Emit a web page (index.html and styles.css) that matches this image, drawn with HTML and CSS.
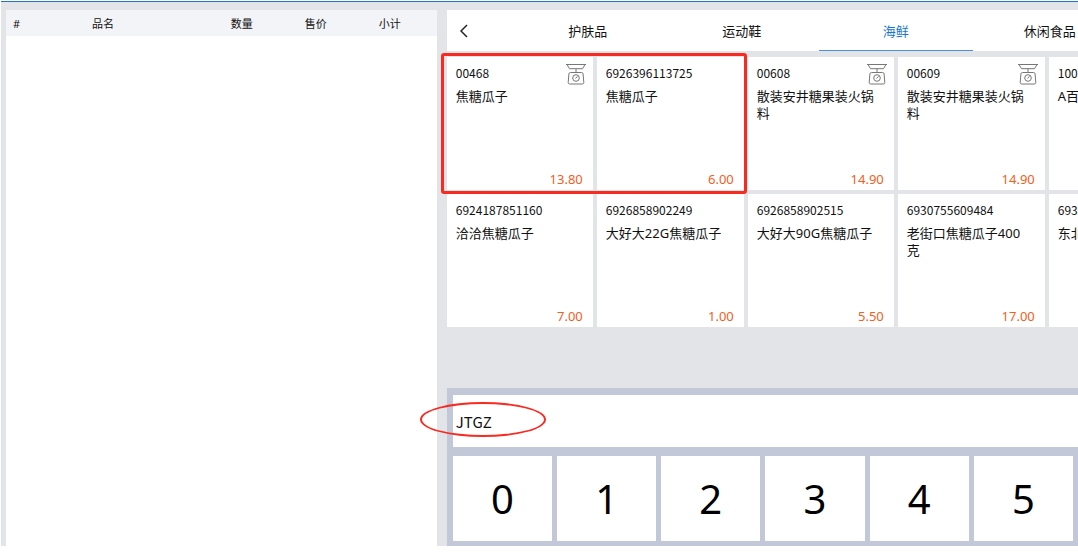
FILE: index.html
```html
<!DOCTYPE html>
<html lang="zh-CN">
<head>
    <meta charset="UTF-8">
    <meta name="viewport" content="width=device-width, initial-scale=1.0">
    <title>收银台</title>
    <link rel="stylesheet" href="styles.css">
</head>
<body>
    <svg class="defs" aria-hidden="true">
        <symbol id="scale" viewBox="0 0 22 22">
            <path d="M1 1.500h20M2 1.500l2.500 4.200h13L20 1.500M11 5.700v3.800M7.500 9.500h7"/>
            <path d="M5.500 9.500h11q1.500 0 1.600 1.500l.7 8.500q.1 1.500-1.500 1.500H4.700q-1.600 0-1.500-1.500l.7-8.500q.1-1.500 1.600-1.500z"/>
            <circle cx="11" cy="15" r="3.300"/>
            <path d="M10.500 15.500l2-2.200"/>
        </symbol>
    </svg>
    <div class="app">
        <aside class="cart">
            <table>
                <thead>
                    <tr>
                        <th class="col-no">#</th>
                        <th>品名</th>
                        <th class="col-num">数量</th>
                        <th class="col-num">售价</th>
                        <th class="col-sum">小计</th>
                    </tr>
                </thead>
                <tbody></tbody>
            </table>
        </aside>
        <main class="goods">
            <nav class="tabs">
                <button class="back" aria-label="返回">
                    <svg viewBox="0 0 8 14"><path d="M7 1L1 7l6 6"/></svg>
                </button>
                <button class="tab">护肤品</button>
                <button class="tab">运动鞋</button>
                <button class="tab active">海鲜</button>
                <button class="tab">休闲食品</button>
            </nav>
            <div class="list">
                <div class="cards">
                    <button class="card">
                        <span class="code">00468</span>
                        <svg class="scale"><use href="#scale"/></svg>
                        <span class="name">焦糖瓜子</span>
                        <span class="price">13.80</span>
                    </button>
                    <button class="card">
                        <span class="code">6926396113725</span>
                        <span class="name">焦糖瓜子</span>
                        <span class="price">6.00</span>
                    </button>
                    <button class="card">
                        <span class="code">00608</span>
                        <svg class="scale"><use href="#scale"/></svg>
                        <span class="name">散装安井糖果装火锅料</span>
                        <span class="price">14.90</span>
                    </button>
                    <button class="card">
                        <span class="code">00609</span>
                        <svg class="scale"><use href="#scale"/></svg>
                        <span class="name">散装安井糖果装火锅料</span>
                        <span class="price">14.90</span>
                    </button>
                    <button class="card">
                        <span class="code">1002</span>
                        <span class="name">A百</span>
                    </button>
                    <button class="card">
                        <span class="code">6924187851160</span>
                        <span class="name">洽洽焦糖瓜子</span>
                        <span class="price">7.00</span>
                    </button>
                    <button class="card">
                        <span class="code">6926858902249</span>
                        <span class="name">大好大22G焦糖瓜子</span>
                        <span class="price">1.00</span>
                    </button>
                    <button class="card">
                        <span class="code">6926858902515</span>
                        <span class="name">大好大90G焦糖瓜子</span>
                        <span class="price">5.50</span>
                    </button>
                    <button class="card">
                        <span class="code">6930755609484</span>
                        <span class="name">老街口焦糖瓜子400克</span>
                        <span class="price">17.00</span>
                    </button>
                    <button class="card">
                        <span class="code">6932</span>
                        <span class="name">东北</span>
                    </button>
                </div>
                <div class="mark-box"></div>
            </div>
            <section class="keypad">
                <input type="text" class="search" value="JTGZ" aria-label="搜索商品">
                <div class="keys">
                    <button>0</button>
                    <button>1</button>
                    <button>2</button>
                    <button>3</button>
                    <button>4</button>
                    <button>5</button>
                </div>
                <div class="mark-oval"></div>
            </section>
        </main>
    </div>
</body>
</html>
```

FILE: styles.css
```css
* {
    box-sizing: border-box;
}
body {
    margin: 0;
    padding: 1px 0 0 1px;
    background: #fff;
    color: #111;
    font-family: "Noto Sans", "Noto Sans CJK SC", sans-serif;
    font-size: 13px;
}
button, input {
    margin: 0;
    padding: 0;
    border: none;
    border-radius: 0;
    background: #fff;
    color: inherit;
    font: inherit;
}
button {
    cursor: pointer;
}
.defs {
    position: absolute;
    width: 0;
    height: 0;
}
.app {
    display: flex;
    gap: 10px;
    min-height: calc(100vh - 8px);
    padding: 8px 0 0 5px;
    border-top: 1px solid #1f78c1;
    background: #e2e4e8;
}

/* cart */
.cart {
    flex: 0 0 calc(40% + 2px);
    background: #fff;
}
.cart table {
    width: 100%;
    table-layout: fixed;
    border-collapse: collapse;
}
.cart th {
    height: 26px;
    padding: 2px 0 0 7px;
    background: #f3f4f7;
    font-size: 11px;
    font-weight: normal;
    line-height: 16px;
    text-align: left;
}
.cart .col-no {
    width: 79px;
}
.cart .col-num {
    width: 74px;
}
.cart .col-sum {
    width: 65px;
}

/* goods */
.goods {
    flex: 1;
    min-width: 0;
    display: flex;
    flex-direction: column;
}
.tabs {
    display: flex;
    height: 41px;
    margin-bottom: 6px;
    background: #fff;
    overflow: hidden;
}
.back {
    flex: 0 0 64px;
    padding-left: 13px;
    text-align: left;
}
.back svg {
    display: block;
    width: 8px;
    height: 14px;
    fill: none;
    stroke: #222;
    stroke-width: 1.5;
}
.tab {
    flex: 0 0 154px;
    border-bottom: 1px solid transparent;
}
.tab.active {
    border-bottom-color: #4a90d9;
    color: #1976d2;
}
.list {
    position: relative;
    margin-bottom: 61px;
}
.cards {
    display: grid;
    grid-template-columns: 146px 147px 146px 147px 146px;
    grid-auto-rows: 133px;
    gap: 4px;
    overflow: hidden;
}
.card {
    display: grid;
    grid-template-columns: 1fr auto;
    grid-template-rows: 30px 1fr auto;
    padding: 0 10px 0 9px;
    text-align: left;
}
.code {
    padding-top: 7px;
    font-family: "Noto Sans CJK SC", sans-serif;
    font-size: 12px;
    line-height: 17px;
}
.scale {
    width: 22px;
    height: 22px;
    margin: 6px -4px 0 0;
    fill: none;
    stroke: #777;
}
.name {
    grid-column: 1 / 3;
    padding: 1px 3px 0 0;
    line-height: 17px;
}
.price {
    grid-column: 1 / 3;
    color: #f2601d;
    line-height: 22px;
    text-align: right;
}
.mark-box {
    position: absolute;
    top: -4px;
    left: -6px;
    width: 306px;
    height: 141px;
    border: 3px solid #fb2a20;
    border-radius: 3px;
    pointer-events: none;
}

/* keypad */
.keypad {
    position: relative;
    margin-top: auto;
    padding: 7px 0 5px 6px;
    background: #c2c8d7;
}
.search {
    display: block;
    width: 100%;
    height: 52px;
    margin-bottom: 9px;
    padding-left: 3px;
    font-family: "Noto Sans CJK SC", sans-serif;
    font-size: 15px;
    outline: none;
}
.keys {
    display: grid;
    grid-template-columns: repeat(6, 1fr);
    gap: 5px;
    padding-right: 5px;
}
.keys button {
    height: 85px;
    color: #000;
    font-size: 40px;
}
.mark-oval {
    position: absolute;
    top: 14px;
    left: -27px;
    width: 126px;
    height: 35px;
    border: 2px solid #fb2a20;
    border-radius: 50%;
    pointer-events: none;
}
```
